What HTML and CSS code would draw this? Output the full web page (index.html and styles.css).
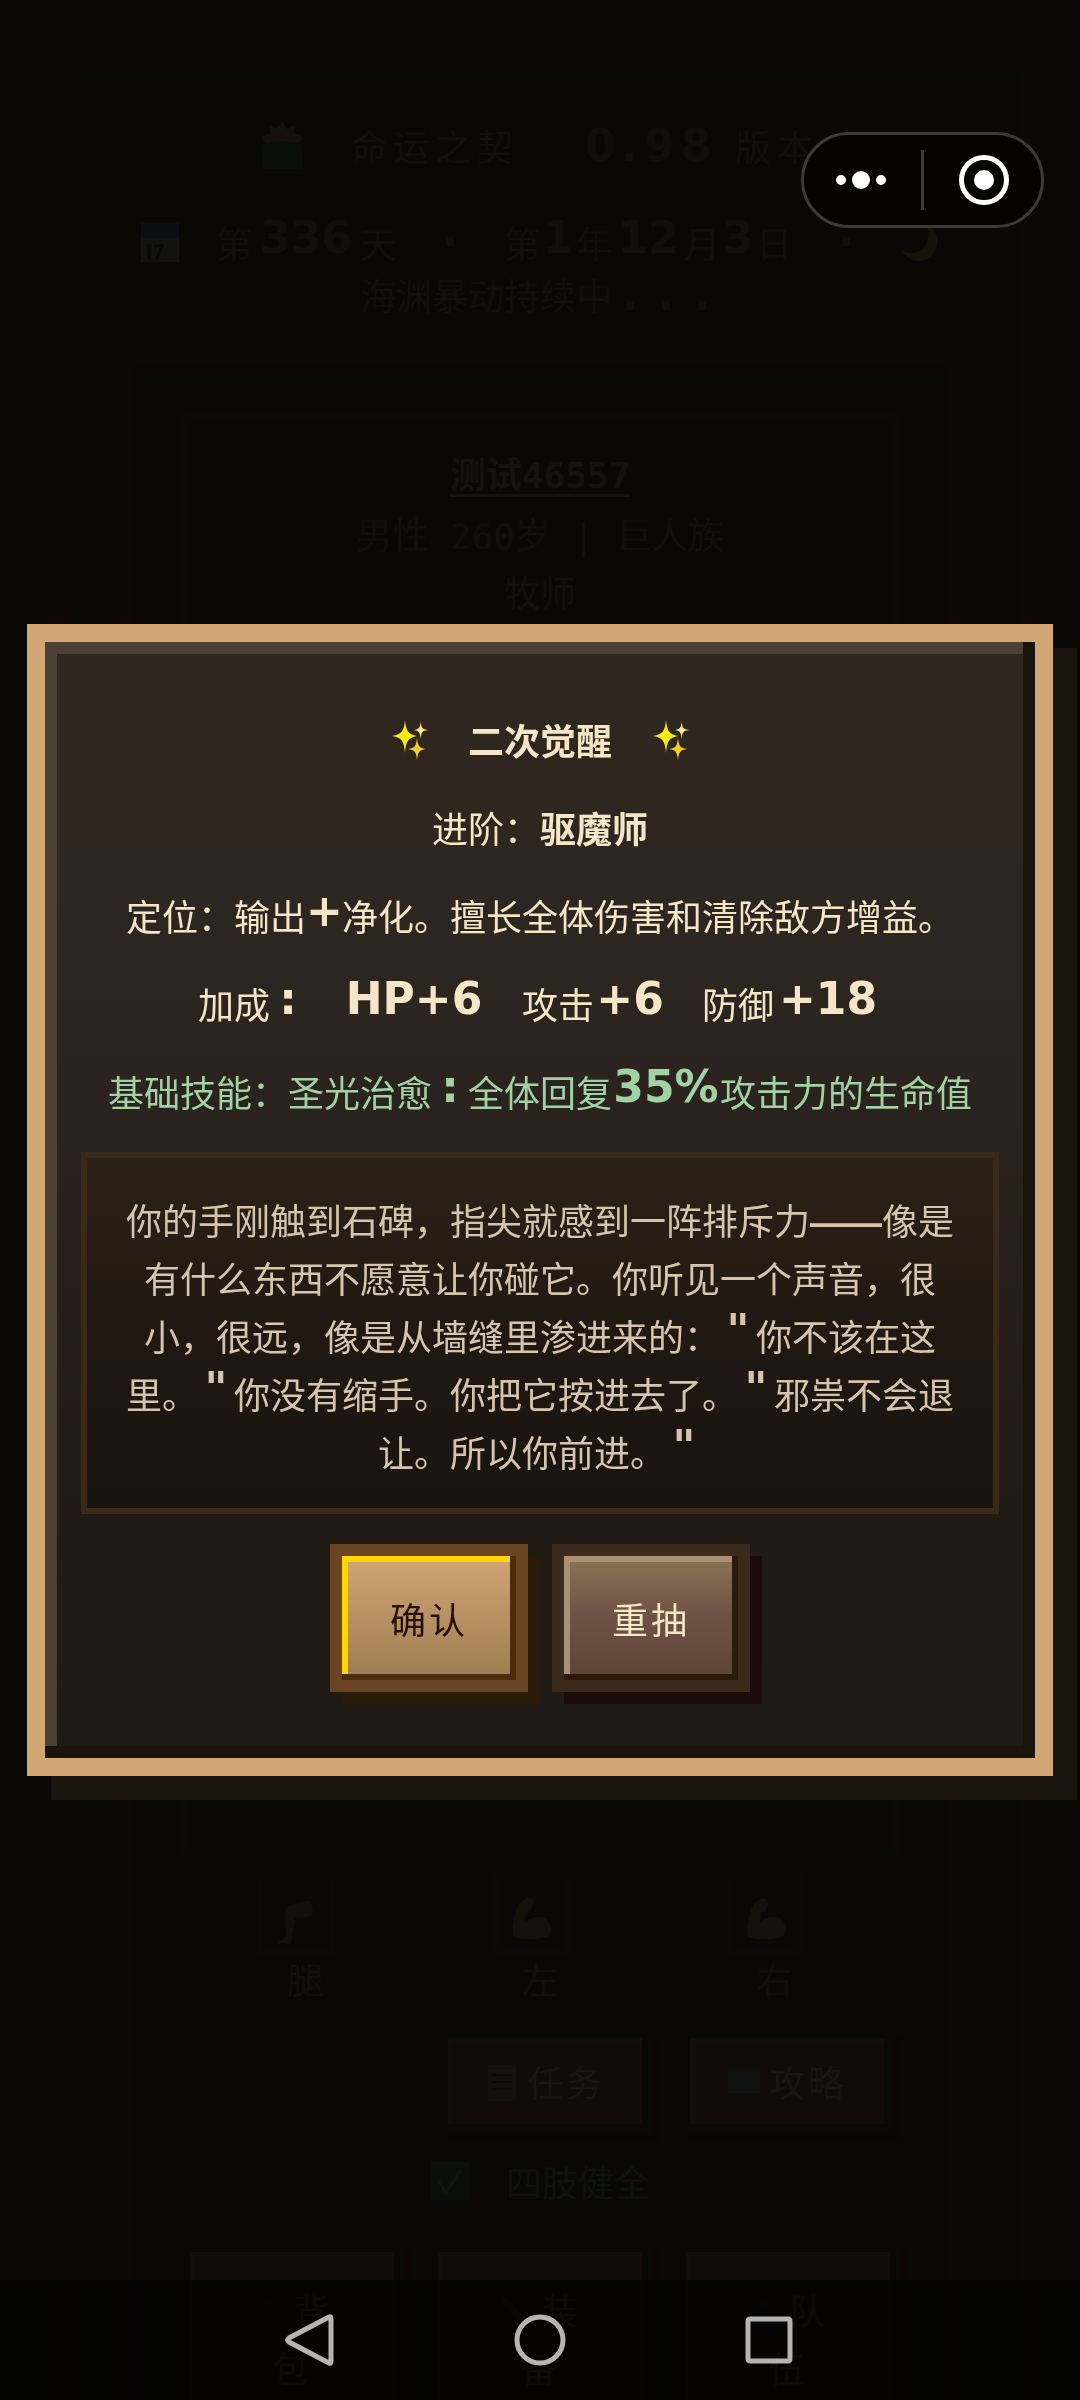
FILE: index.html
```html
<!DOCTYPE html>
<html lang="zh-CN">
<head>
<meta charset="utf-8">
<meta name="viewport" content="width=device-width, initial-scale=1">
<title>命运之契</title>
<link rel="stylesheet" href="styles.css">
</head>
<body>
<svg class="defs" aria-hidden="true">
  <symbol id="sparkles" viewBox="0 0 45 45">
    <path fill="#fdea12" d="M18 3C19 14 21 17 30 19C21 21 19 24 18 36C17 24 15 21 5 19C15 17 17 14 18 3Z"/>
    <path fill="#f6e68c" d="M34 4C34 11 35 12 41 13C35 14 34 15 34 23C33 15 32 14 27 13C32 12 33 11 34 4Z"/>
    <path fill="#f3cb2e" d="M30 21C31 29 32 31 39 32C32 33 31 35 30 43C29 35 28 33 21 32C28 31 29 29 30 21Z"/>
  </symbol>
  <symbol id="arm" viewBox="0 0 42 42">
    <path d="M16 1C22 0 24 3 23 8L20 14L16 15L15 25C19 20 28 18 34 20C41 23 43 33 39 38C32 43 9 43 3 39C1 29 5 11 10 5Z"/>
  </symbol>
</svg>

<main class="page">
  <section class="frame">
    <h1 class="brand">
      <svg class="emoji" viewBox="0 0 42 48"><path fill="#131109" d="M21 0L26 8L34 4L33 13L42 16L36 24H6L0 16L9 13L8 4L16 8Z"/><path fill="#0a0e09" d="M1 24Q21 16 41 24V48H1Z"/></svg>
      <span>命运之契</span>
      <span class="version"><b class="brand-num">0.98</b>版本</span>
    </h1>
    <div class="calendar">
      <div class="date">
        <svg class="emoji" viewBox="0 0 40 40"><path fill="#121211" d="M1 12H39V40H1Z"/><path fill="#0b0e12" d="M1 1H39V16H1Z"/><path fill="none" stroke="#080807" stroke-width="3" d="M6 24H9V37M14 24H22L17 37"/></svg>
        <span>第<b class="px w3">336</b>天</span>
        <b class="px w1">·</b>
        <span>第<b class="px w1">1</b>年<b class="px w2">12</b>月<b class="px w1">3</b>日</span>
        <b class="px w1">·</b>
        <svg class="emoji" viewBox="0 0 40 40"><path fill="#151209" d="M27 2C47 16 35 40 17 39C9 38 4 33 1 28C19 37 33 24 27 2Z"/></svg>
      </div>
      <p>海渊暴动持续中<b class="px w1 dot">.</b><b class="px w1 dot">.</b><b class="px w1 dot">.</b></p>
    </div>
    <div class="panel">
      <div class="profile">
        <a class="name" href="#">测试46557</a>
        <p>男性 260岁 | 巨人族</p>
        <p class="job">牧师</p>
      </div>
      <ul class="limbs">
        <li><svg viewBox="0 0 66 71"><path fill="#13100a" d="M48 22Q30 22 22 30L23 57L14 64L28 65L32 39Q48 40 50 34Z"/></svg>腿</li>
        <li><svg class="muscle"><use href="#arm"/></svg>左</li>
        <li><svg class="muscle"><use href="#arm"/></svg>右</li>
      </ul>
      <div class="tools">
        <button class="dim" type="button"><svg viewBox="0 0 30 40"><path fill="#13110f" d="M1 4H29V40H1Z"/><path stroke="#0d0b09" stroke-width="2" d="M5 14H25M5 21H25M5 28H25"/></svg>任务</button>
        <button class="dim" type="button"><svg viewBox="0 0 36 30"><path fill="#101111" d="M1 4Q10 0 18 4Q26 0 35 4V28H1Z"/></svg>攻略</button>
      </div>
      <p class="health"><svg class="emoji" viewBox="0 0 40 40"><path fill="#0a0f09" d="M1 1H39V39H1Z"/><path fill="none" stroke="#10150e" stroke-width="3" d="M9 21L16 31L31 9"/></svg>四肢健全</p>
      <div class="menu">
        <button class="dim" type="button"><svg viewBox="0 0 36 36"><path fill="#170807" d="M8 34V12Q18 -4 28 12V34Z"/></svg>背<br>包</button>
        <button class="dim" type="button"><svg viewBox="0 0 36 36"><path fill="#131312" d="M2 2L8 3L32 30L28 34L4 9Z"/></svg>装<br>备</button>
        <button class="dim" type="button"><svg viewBox="0 0 36 36"><path fill="#090d14" d="M12 10A6 6 0 0 1 24 10A6 6 0 0 1 12 10M6 34Q6 18 18 18Q30 18 30 34Z"/></svg>队<br>伍</button>
      </div>
    </div>
  </section>
</main>

<div class="overlay">
  <section class="modal" role="dialog" aria-modal="true" aria-labelledby="modal-title">
    <h2 class="row title" id="modal-title"><svg class="spark"><use href="#sparkles"/></svg>二次觉醒<svg class="spark"><use href="#sparkles"/></svg></h2>
    <p class="row">进阶：<strong>驱魔师</strong></p>
    <p class="row">定位：输出<b class="px w1">+</b>净化。擅长全体伤害和清除敌方增益。</p>
    <p class="row">加成<b class="px w1">:</b>　<b class="px w4">HP+6</b>　攻击<b class="px w2">+6</b>　防御<b class="px w3">+18</b></p>
    <p class="row skill">基础技能：圣光治愈<b class="px w1">:</b>全体回复<b class="px w3">35%</b>攻击力的生命值</p>
    <p class="story">你的手刚触到石碑，指尖就感到一阵排斥力<b class="dash">——</b>像是有什么东西不愿意让你碰它。你听见一个声音，很小，很远，像是从墙缝里渗进来的：<b class="px w1">"</b>你不该在这里。<b class="px w1">"</b>你没有缩手。你把它按进去了。<b class="px w1">"</b>邪祟不会退让。所以你前进。<b class="px w1">"</b></p>
    <div class="actions">
      <button class="btn primary" type="button">确认</button>
      <button class="btn" type="button">重抽</button>
    </div>
  </section>
</div>

<div class="capsule">
  <button type="button" aria-label="更多"><svg viewBox="0 0 50 50"><circle cx="5" cy="25" r="5"/><circle cx="25" cy="25" r="9"/><circle cx="45" cy="25" r="5"/></svg></button>
  <button type="button" aria-label="关闭"><svg viewBox="0 0 50 50"><circle cx="25" cy="25" r="10"/><circle cx="25" cy="25" r="22.5" fill="none" stroke="#fff" stroke-width="5"/></svg></button>
</div>

<nav class="navbar">
  <button type="button" aria-label="返回"><svg viewBox="0 0 54 54"><path d="M45 4Q47 3 47 6V48Q47 51 45 50L5 29Q2 27 5 25Z"/></svg></button>
  <button type="button" aria-label="主页"><svg viewBox="0 0 54 54"><circle cx="27" cy="27" r="23"/></svg></button>
  <button type="button" aria-label="最近任务"><svg viewBox="0 0 54 54"><rect x="6" y="6" width="42" height="42" rx="2"/></svg></button>
</nav>
</body>
</html>
```
FILE: styles.css
```css
* { box-sizing: border-box; }

body {
  margin: 0;
  background: #090805;
  color: #110f0c;
  font: 36px/58px "Noto Sans CJK SC", sans-serif;
  text-spacing-trim: space-all;
}

h1, h2, p, ul { margin: 0; padding: 0; font-size: 36px; }

button { font: inherit; color: inherit; cursor: pointer; }

.defs { position: absolute; width: 0; height: 0; }

/* Pixel-style Latin glyphs, set on a grid of 36px cells */
.px {
  display: inline-block;
  font: bold 44px/36px "DejaVu Sans", sans-serif;
  height: 36px;
  vertical-align: 5px;
  text-align: center;
  white-space: nowrap;
}
.w1 { width: 36px; }
.w2 { width: 72px; }
.w3 { width: 108px; }
.w4 { width: 144px; }
.dot { vertical-align: baseline; }
.dash { font-family: "Liberation Sans", sans-serif; line-height: 36px; }

/* Page behind the dialog */
.page { height: 100vh; overflow: hidden; padding: 48px; }

.frame {
  min-height: 100%;
  border: 12px solid #0b0806;
  border-right-color: #0c0805;
  box-shadow: inset 12px 12px #0d0805;
  background: #090807;
  padding: 54px 60px 0;
}

.brand {
  display: flex;
  justify-content: center;
  align-items: center;
  gap: 48px;
  height: 62px;
  font-weight: 400;
  letter-spacing: 6px;
}
.brand .emoji { width: 42px; height: 48px; }
.brand-num {
  display: inline-block;
  width: 168px;
  font: bold 44px/58px "DejaVu Sans", sans-serif;
  color: #130d0a;
  text-align: center;
}
.emoji { flex: none; width: 40px; height: 40px; }

.calendar { margin-top: 40px; line-height: 52px; text-align: center; }
.date { display: flex; justify-content: center; align-items: center; gap: 36px; height: 52px; }

.panel {
  margin-top: 32px;
  border: 12px solid #0c0806;
  box-shadow: inset 12px 12px #0c0705;
  padding: 48px;
}

.profile {
  min-height: 1443px;
  border: 6px solid #0a0907;
  box-shadow: inset 0 -12px #0c0705;
  padding: 26px 0;
  font-family: "DejaVu Sans Mono", "Noto Sans CJK SC", monospace;
  text-align: center;
}
.name { display: block; color: #16120f; font-weight: 700; text-decoration: underline; text-underline-offset: 6px; line-height: 64px; }
.job { color: #130f0b; }

.limbs {
  display: grid;
  grid-template-columns: repeat(3, 1fr);
  list-style: none;
  padding: 18px 8px 0;
  text-align: center;
  line-height: 44px;
}
.limbs li { display: grid; justify-items: center; }
.limbs svg { width: 78px; height: 83px; margin-right: 18px; border: 6px solid #0a0907; }
.limbs .muscle { fill: #14100a; padding: 18px 12px 10px; }

.dim {
  border: 10px solid #0a0806;
  box-shadow: inset 4px 4px #110e0b, 8px 8px #0b0605;
  background: #110b09;
  color: #191512;
  padding: 14px 0;
  letter-spacing: 3px;
}
.tools {
  display: grid;
  grid-template-columns: repeat(2, 214px);
  justify-content: end;
  gap: 28px;
  margin-top: 28px;
  padding-right: 6px;
}
.tools .dim { display: flex; justify-content: center; align-items: center; gap: 8px; }
.tools svg { width: 34px; height: 40px; }

.health {
  display: flex;
  justify-content: center;
  align-items: center;
  gap: 36px;
  margin-top: 18px;
  color: #0d120b;
}

.menu { display: grid; grid-template-columns: repeat(3, 1fr); gap: 24px; margin-top: 32px; }
.menu .dim { padding: 28px 0; color: #1c1a18; }
.menu svg { width: 36px; height: 36px; margin-right: 6px; vertical-align: -6px; }

/* Dialog */
.overlay {
  position: fixed;
  inset: 0;
  display: flex;
  justify-content: center;
  align-items: center;
  padding: 27px;
}

.modal {
  width: 100%;
  border: 18px solid #d2a574;
  padding: 68px 36px 66px;
  background: linear-gradient(#30281f, #2c241f 35%, #241b16 70%, #1e1b14);
  box-shadow: inset -12px -12px #1a140f, inset 12px 12px #4a4035, 24px 24px #1a140f;
  color: #f5e6c8;
  text-align: center;
}

.row { height: 58px; margin-bottom: 30px; white-space: nowrap; }
.title { display: flex; justify-content: center; align-items: center; gap: 36px; font-weight: 700; }
.spark { width: 45px; height: 45px; }
.skill { color: #a0d2a4; }

.story {
  margin-top: 32px;
  border: 6px solid #3a2a1b;
  padding: 32px 30px 28px;
  background: linear-gradient(#2c2116, #211812 50%, #19130e);
  color: #d5c5b0;
}

.actions { display: flex; justify-content: center; gap: 24px; margin-top: 30px; }

.btn {
  border: 12px solid #3a2a1b;
  padding: 33px 48px;
  background: linear-gradient(#8b7355, #6d5144 50%, #5d4437) padding-box;
  box-shadow: inset -6px -6px #2c1a0b, inset 6px 6px #a89174, 12px 12px #1b0a0a;
  color: #f5e6c8;
  letter-spacing: 3px;
}
.primary {
  border-color: #6b4423;
  background: linear-gradient(#d2a574, #9c7d50) padding-box;
  box-shadow: inset -6px -6px #4d2b0c, inset 6px 6px #ffd700, 12px 12px #2a1a08;
  color: #2a0f08;
}

/* Mini-program capsule */
.capsule {
  position: fixed;
  top: 132px;
  right: 36px;
  display: grid;
  grid-template-columns: 117px 1fr;
  align-items: center;
  width: 243px;
  height: 96px;
  border: 3px solid #3b3b3a;
  border-radius: 48px;
  background: #040302;
}
.capsule button {
  display: grid;
  place-items: center;
  height: 60px;
  border: 0;
  padding: 0 3px 0 0;
  background: none;
}
.capsule button + button { border-left: 3px solid #3b3b3a; padding: 0 0 0 3px; }
.capsule svg { width: 50px; height: 50px; fill: #fff; }

/* System navigation */
.navbar {
  position: fixed;
  inset: auto 0 0;
  display: flex;
  justify-content: center;
  align-items: center;
  gap: 175px;
  height: 120px;
  background: rgba(0, 0, 0, 0.6);
}
.navbar button { border: 0; padding: 0; background: none; line-height: 0; }
.navbar svg { width: 54px; height: 54px; fill: none; stroke: #b5b5b2; stroke-width: 5; }
```
